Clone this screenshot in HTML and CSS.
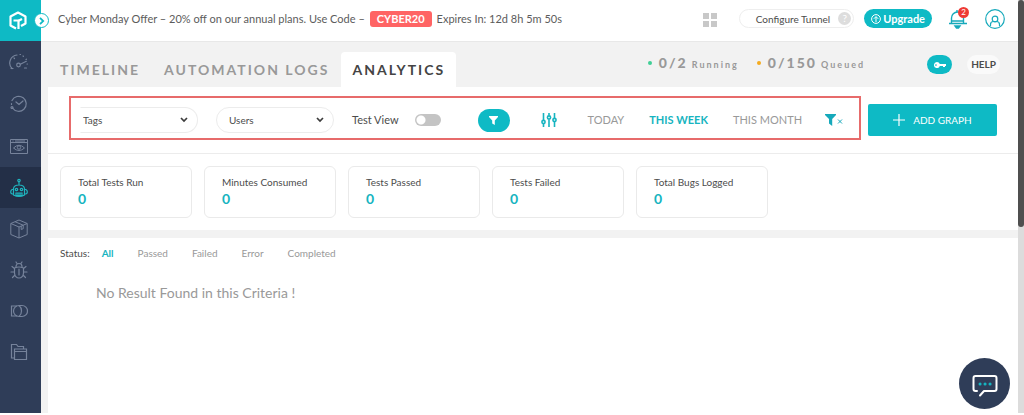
FILE: index.html
```html
<!DOCTYPE html>
<html lang="en">
<head>
<meta charset="utf-8">
<title>Analytics</title>
<link rel="stylesheet" href="styles.css">
</head>
<body>
<div class="app">
  <nav class="sidebar" aria-label="Main">
    <a class="logo" href="#" aria-label="Home">
      <svg width="18" height="20" viewBox="0 0 18 20" fill="none" stroke="#fff" stroke-width="2.200" stroke-linejoin="round"><path d="M7 17.500 1.500 14.500V5.500L9 1.500l7.500 4v7L12 15"/><path d="M4.500 9.500H9.500V18"/><path d="M9.500 9.800 13 8"/></svg>
    </a>
    <a class="side-link" href="#" aria-label="Realtime">
      <svg width="20" height="18" viewBox="0 0 20 18" fill="none" stroke="currentColor" stroke-width="1.200" stroke-linecap="round"><path d="M3 15.500A8 8 0 0 1 8 2M2 15.500h2M11 1.500h.5M14 3l.4.300M17 6.500l.4-.3M18 11h.5M17.500 15h-2M5 5l.5.500"/><circle cx="9.500" cy="12" r="1.800"/><path d="m11.300 11.300 6-3"/></svg>
    </a>
    <a class="side-link" href="#" aria-label="Automation history">
      <svg width="18" height="18" viewBox="0 0 18 18" fill="none" stroke="currentColor" stroke-width="1.200" stroke-linecap="round"><path d="M2 5.500a7.500 7.500 0 1 1 .5 7.500M1.500 9.500v-1"/><circle cx="2" cy="12.500" r="1"/><path d="m6 7 3 2.500L13 6"/></svg>
    </a>
    <a class="side-link" href="#" aria-label="Visual testing">
      <svg width="18" height="16" viewBox="0 0 18 16" fill="none" stroke="currentColor"><path d="M.5 1.500h17v14H.5zM.5 4.500h17M2.500 3h1M5 3h10"/><path d="M3.500 10Q9 4.500 14.500 10 9 15 3.500 10z"/><circle cx="9" cy="9.500" r="1.700"/></svg>
    </a>
    <a class="side-link side-link-active" href="#" aria-label="Automation" aria-current="page">
      <svg width="18" height="20" viewBox="0 0 18 20" fill="none" stroke="currentColor" stroke-width="1.200"><circle cx="9" cy="2.500" r="1.200"/><path d="M9 4v3M3.500 17V10.500Q4 7 9 7t5.500 3.500V17Q9 20 3.500 17zM3.500 11.500H2L.8 13v2L2 16h1.500M14.500 11.500H16l1.200 1.500v2L16 16h-1.500"/><circle cx="6.500" cy="11.500" r="1.200"/><circle cx="11.500" cy="11.500" r="1.200"/><path d="M6 15h6v2.500H6zM8 15v2.500M10 15v2.500"/></svg>
    </a>
    <a class="side-link" href="#" aria-label="Builds">
      <svg width="18" height="20" viewBox="0 0 18 20" fill="none" stroke="currentColor" stroke-linejoin="round"><path d="M.8 4.500 9 1l8.200 3.500v11L9 19 .8 15.500zM.8 4.500 9 8l8.200-3.500M9 8v11M5 2.700 13.200 6.200v3.500l-2 .8V7"/></svg>
    </a>
    <a class="side-link" href="#" aria-label="Issues">
      <svg width="18" height="18" viewBox="0 0 18 18" fill="none" stroke="currentColor" stroke-width="1.200" stroke-linecap="round"><path d="M6 6.500V5.500a3 3 0 0 1 6 0v1M7 2.500 6 1M11 2.500 12 1M9 8v6"/><path d="M4.500 7Q9 5 13.500 7v5a4.500 5 0 0 1-9 0zM4.500 7.500 2 5.500M13.500 7.500 16 5.500M4.500 11H1M13.500 11H17M5 14l-2.500 2.500M13 14l2.500 2.500"/></svg>
    </a>
    <a class="side-link" href="#" aria-label="Integrations">
      <svg width="18" height="14" viewBox="0 0 18 14" fill="none" stroke="currentColor" stroke-width="1.200"><path d="M7 2H1.500v10H7"/><path d="M9 1.500a5.500 5.500 0 0 0 0 11c2-1.500 2.500-3 2.500-5.500S11 3 9 1.500z"/><path d="M9 1.500h3a5.500 5.500 0 0 1 0 11H9"/></svg>
    </a>
    <a class="side-link" href="#" aria-label="Projects">
      <svg width="18" height="18" viewBox="0 0 18 18" fill="none" stroke="currentColor" stroke-width="1.200"><path d="M4.500 15H1.500V1.500h5L8 3.500h5.500V6"/><path d="M4.500 16.500V6H16.500v10.500zM4.500 8.500H16.500"/></svg>
    </a>
    <button class="expand" type="button" aria-label="Expand menu">
      <svg width="6" height="8" viewBox="0 0 6 8" fill="none" stroke="#0ebac5" stroke-width="1.800"><path d="m1 .8 3.200 3.200L1 7.200"/></svg>
    </button>
  </nav>

  <div class="main">
    <header class="topbar">
      <p class="offer"><span>Cyber Monday Offer – 20% off on our annual plans. Use Code –</span> <b class="code">CYBER20</b> <span>Expires In: 12d 8h 5m 50s</span></p>
      <div class="top-actions">
        <button class="plain apps" type="button" aria-label="Apps">
          <svg width="14" height="14" viewBox="0 0 14 14" fill="#c8c8c8"><path d="M0 0h6v6H0zM8 0h6v6H8zM0 8h6v6H0zM8 8h6v6H8z"/></svg>
        </button>
        <button class="tunnel" type="button">Configure Tunnel <span class="question">?</span></button>
        <button class="upgrade" type="button">
          <svg width="10" height="10" viewBox="0 0 10 10" fill="none" stroke="#fff"><circle cx="5" cy="5" r="4.400"/><path d="M5 8V2.800M2.800 4.800 5 2.600l2.200 2.200"/></svg>Upgrade</button>
        <button class="plain bell" type="button" aria-label="Notifications">
          <svg width="20" height="20" viewBox="0 0 20 20" fill="none" stroke="#16a9bb" stroke-width="1.400"><path d="M1 14.500h18M3.500 14.500V9a6 6 0 0 1 12 0v5.500M3.500 12h12M9 3V1"/><path d="M7 17h5l-1.500 2h-2z" fill="#16a9bb"/></svg>
          <span class="badge">2</span>
        </button>
        <button class="plain" type="button" aria-label="Account">
          <svg width="20" height="20" viewBox="0 0 20 20" fill="none" stroke="#16a9bb" stroke-width="1.200"><circle cx="10" cy="10" r="9.300"/><circle cx="10" cy="10" r="2.800"/><path d="M5.500 17v-1.500q0-3 3-3h3q3 0 3 3V17"/></svg>
        </button>
      </div>
    </header>

    <div class="tabbar">
      <nav class="tabs" aria-label="Automation views">
        <a class="tab" href="#">TIMELINE</a>
        <a class="tab" href="#">AUTOMATION LOGS</a>
        <a class="tab tab-active" href="#" aria-current="page">ANALYTICS</a>
      </nav>
      <div class="usage">
        <span class="usage-item"><i class="dot dot-green"></i><b>0/2</b> Running</span>
        <span class="usage-item"><i class="dot dot-amber"></i><b>0/150</b> Queued</span>
      </div>
      <button class="key" type="button" aria-label="Access key">
        <svg width="12" height="6" viewBox="0 0 12 6" fill="#fff"><path fill-rule="evenodd" d="M3 0a3 3 0 0 1 2.800 2H12v2h-1v1H9V4H5.800A3 3 0 1 1 3 0zM2.200 2.300a.8.800 0 1 0 .1 1.500.8.800 0 0 0-.1-1.500z"/></svg>
      </button>
      <button class="help" type="button">HELP</button>
    </div>

    <main class="content">
      <section class="toolbar">
        <div class="filters">
          <div class="select-wrap">
            <select class="select" aria-label="Tags"><option>Tags</option></select>
            <svg class="chevron" width="8" height="6" viewBox="0 0 8 6" fill="none" stroke="#3c3c3c" stroke-width="1.700"><path d="m1 1 3 3 3-3"/></svg>
          </div>
          <div class="select-wrap">
            <select class="select" aria-label="Users"><option>Users</option></select>
            <svg class="chevron" width="8" height="6" viewBox="0 0 8 6" fill="none" stroke="#3c3c3c" stroke-width="1.700"><path d="m1 1 3 3 3-3"/></svg>
          </div>
          <label class="switch-label">Test View <input class="switch" type="checkbox"></label>
          <button class="filter" type="button" aria-label="Filter">
            <svg width="9" height="9" viewBox="0 0 9 9" fill="#fff"><path d="M0 0h9v1L5.800 4.500V9L3.200 7.500v-3L0 1z"/></svg>
          </button>
          <button class="plain sliders" type="button" aria-label="Settings">
            <svg width="16" height="14" viewBox="0 0 16 14" fill="none" stroke="#16b4c0" stroke-width="1.600"><path d="M2.500 0v7M2.500 11v3M8 0v2.500M8 6.500V14M13.500 0v5M13.500 9v5"/><circle cx="2.500" cy="9" r="1.600"/><circle cx="8" cy="4.500" r="1.600"/><circle cx="13.500" cy="7" r="1.600"/></svg>
          </button>
          <div class="ranges">
            <button class="range" type="button">TODAY</button>
            <button class="range range-active" type="button">THIS WEEK</button>
            <button class="range" type="button">THIS MONTH</button>
          </div>
          <button class="plain clear" type="button" aria-label="Clear filter">
            <svg width="18" height="12" viewBox="0 0 18 12" fill="#16a9bb"><path d="M0 0h11v1L7.200 5v7L4 9.500V5L0 1z"/><path d="m13 5.500 4 4m0-4-4 4" stroke="#16a9bb"/></svg>
          </button>
        </div>
        <button class="add" type="button">
          <svg width="12" height="12" viewBox="0 0 12 12" stroke="#fff" stroke-width="1.200"><path d="M6 0v12M0 6h12"/></svg>ADD GRAPH</button>
      </section>

      <section class="cards">
        <div class="card"><h2>Total Tests Run</h2><p>0</p></div>
        <div class="card"><h2>Minutes Consumed</h2><p>0</p></div>
        <div class="card"><h2>Tests Passed</h2><p>0</p></div>
        <div class="card"><h2>Tests Failed</h2><p>0</p></div>
        <div class="card"><h2>Total Bugs Logged</h2><p>0</p></div>
      </section>

      <section class="results">
        <div class="statuses">
          <span>Status:</span>
          <button class="status status-active" type="button">All</button>
          <button class="status" type="button">Passed</button>
          <button class="status" type="button">Failed</button>
          <button class="status" type="button">Error</button>
          <button class="status" type="button">Completed</button>
        </div>
        <p class="empty">No Result Found in this Criteria !</p>
      </section>
    </main>
  </div>
  <div class="scroll"><div class="thumb"></div></div>
</div>
<button class="chat" type="button" aria-label="Chat">
  <svg width="26" height="24" viewBox="0 0 26 24" fill="none" stroke="#fff" stroke-width="2" stroke-linejoin="round" stroke-linecap="round"><path d="M5 17H3.500Q1.500 17 1.500 15V4q0-2 2-2h19q2 0 2 2v11q0 2-2 2H12l-4 4.500"/><path d="M8 10h.1M13 10h.1M18 10h.1" stroke="#16b4c0" stroke-width="3"/></svg>
</button>
</body>
</html>
```

FILE: styles.css
```css
* { box-sizing: border-box; }
body {
  margin: 0;
  font: 11px/16px Lato, "Open Sans", sans-serif;
  color: #4c4c4c;
  background: #fff;
}
button, select { font: inherit; color: inherit; }
button { border: 0; padding: 0; cursor: pointer; }
a { color: inherit; text-decoration: none; }
h2, p { margin: 0; }
svg { display: block; flex: none; }
.plain { background: none; }

.app { display: flex; min-height: calc(100vh - 2px); }

.sidebar {
  position: relative;
  flex: none;
  display: flex;
  flex-direction: column;
  width: 41px;
  background: #2f3d58;
  color: #76839b;
}
.logo, .side-link { display: flex; align-items: center; justify-content: center; padding-right: 3px; }
.logo { height: 41px; padding-right: 5px; background: #0ebac5; }
.side-link { height: 42px; }
.side-link-active, .side-link-active ~ .side-link { height: 41px; }
.side-link-active { background: #232f47; color: #1fb5bf; }
.expand {
  position: absolute;
  top: 13px;
  right: -8px;
  display: grid;
  place-items: center;
  width: 15px;
  height: 15px;
  border: 1px solid #0ebac5;
  border-radius: 50%;
  background: #fff;
}

.main { flex: 1; display: flex; flex-direction: column; min-width: 0; background: #f2f2f2; }
.topbar {
  display: flex;
  align-items: center;
  justify-content: space-between;
  height: 41px;
  padding: 0 13px 4px 17px;
  background: #fff;
}
.offer { display: flex; align-items: center; gap: 5px; font-size: 11px; color: #5c5c5c; white-space: nowrap; }
.code {
  padding: 0 7px;
  border-radius: 3px;
  background: #ff6464;
  color: #fff;
}
.top-actions { display: flex; align-items: center; }
.apps { margin: 3px 22px 0 0; }
.tunnel {
  display: flex;
  align-items: center;
  gap: 8px;
  height: 19px;
  padding: 0 2px 0 16px;
  border: 1px solid #eee;
  border-radius: 10px;
  background: #fff;
  font-size: 10px;
}
.question { width: 13px; border-radius: 50%; background: #ddd; color: #fff; font-size: 10px; line-height: 13px; }
.upgrade {
  display: flex;
  align-items: center;
  gap: 2px;
  height: 19px;
  margin-left: 10px;
  padding: 0 7px;
  border-radius: 10px;
  background: #0ebac5;
  color: #fff;
  font-weight: 700;
}
.bell { position: relative; margin: 0 17px 0 16px; }
.badge {
  position: absolute;
  top: -2px;
  right: -1px;
  width: 11px;
  border-radius: 50%;
  background: #ee3a34;
  color: #fff;
  font-size: 8px;
  line-height: 11px;
}

.tabbar { display: flex; align-items: center; height: 46px; padding: 0 18px 0 7px; border-top: 1px solid #e8e8e8; }
.tabs { display: flex; align-self: flex-end; font-size: 14px; font-weight: 700; letter-spacing: 2px; color: #999; }
.tab { padding: 10px 12px 9px; white-space: nowrap; }
.tab-active { padding: 10px 11px 9px; background: #fff; border-radius: 4px 4px 0 0; color: #444; }
.usage { display: flex; gap: 18px; margin-left: auto; padding-bottom: 1px; font-size: 9px; font-weight: 700; letter-spacing: 2px; color: #999; white-space: nowrap; }
.usage-item b { font-size: 14px; }
.dot { display: inline-block; width: 4px; height: 4px; margin-right: 7px; border-radius: 50%; vertical-align: 3px; }
.dot-green { background: #40cf96; }
.dot-amber { background: #f5ab1e; }
.key { display: grid; place-items: center; width: 25px; height: 19px; margin: 0 15px 0 62px; border-radius: 10px; background: #0ebac5; }
.help { padding: 0 4px; border-radius: 10px; background: #fafafa; font-size: 10px; line-height: 19px; font-weight: 700; }

.content { flex: 1; display: flex; flex-direction: column; margin-left: 7px; background: #f2f2f2; }
.toolbar {
  display: flex;
  align-items: flex-start;
  justify-content: space-between;
  height: 66px;
  padding: 9px 21px;
  background: #fff;
}
.filters { flex: 1; display: flex; align-items: center; max-width: 792px; height: 44px; padding-top: 4px; border: 2px solid #e76b6b; }
.select-wrap { position: relative; width: 118px; margin-left: 9px; }
.select-wrap + .select-wrap { margin-left: 18px; }
.select { display: block; appearance: none; width: 100%; height: 26px; padding: 0 12px; border: 1px solid #ececec; border-radius: 13px; background: #fff; font-size: 10px; }
.select-wrap:first-child .select { padding-left: 2px; border-left-color: transparent; border-radius: 0 13px 13px 0; }
.chevron { position: absolute; right: 10px; top: 10px; pointer-events: none; }
.switch-label { display: flex; align-items: center; gap: 16px; margin-left: 18px; white-space: nowrap; }
.switch { appearance: none; width: 26px; height: 12px; margin: 0; border-radius: 6px; background: radial-gradient(circle at 6px 6px, #fff 4px, #c4c4c4 5px); }
.filter { display: grid; place-items: center; width: 32px; height: 23px; margin-left: 37px; border-radius: 12px; background: #0ebac5; }
.sliders { margin-left: 31px; }
.ranges { display: flex; gap: 25px; margin-left: 31px; white-space: nowrap; }
.range { background: none; color: #999; }
.range-active { color: #16b4c0; font-weight: 700; }
.clear { margin-left: 23px; }
.add {
  display: flex;
  align-items: center;
  justify-content: center;
  gap: 8px;
  width: 129px;
  height: 32px;
  margin-top: 8px;
  border-radius: 2px;
  background: #0ebac5;
  color: #fff;
  font-size: 10px;
}

.cards { display: flex; gap: 12px; padding: 12px; border-top: 1px solid #ececec; background: #fff; }
.card { width: 132px; padding: 7px 17px 9px; border: 1px solid #eaeaea; border-radius: 6px; }
.card h2 { font-size: 10px; line-height: 16px; font-weight: 400; white-space: nowrap; }
.card p { font-size: 14px; line-height: 18px; font-weight: 700; color: #16b4c0; }

.results { flex: 1; margin-top: 8px; padding: 7px 12px; background: #fff; }
.statuses { display: flex; font-size: 10px; }
.status { margin-left: 24px; background: none; color: #999; }
.status-active { margin-left: 12px; color: #16b4c0; font-weight: 700; }
.empty { margin: 22px 0 0 36px; font-size: 14px; line-height: 20px; color: #999; }

.scroll { flex: none; width: 6px; background: #dcdcdc; }
.thumb { height: 227px; border-radius: 3px; background: #4f4f4f; }

.chat {
  position: fixed;
  right: 14px;
  bottom: 6px;
  display: grid;
  place-items: center;
  width: 51px;
  height: 51px;
  padding-top: 4px;
  border-radius: 50%;
  background: #2f3d58;
}
```
